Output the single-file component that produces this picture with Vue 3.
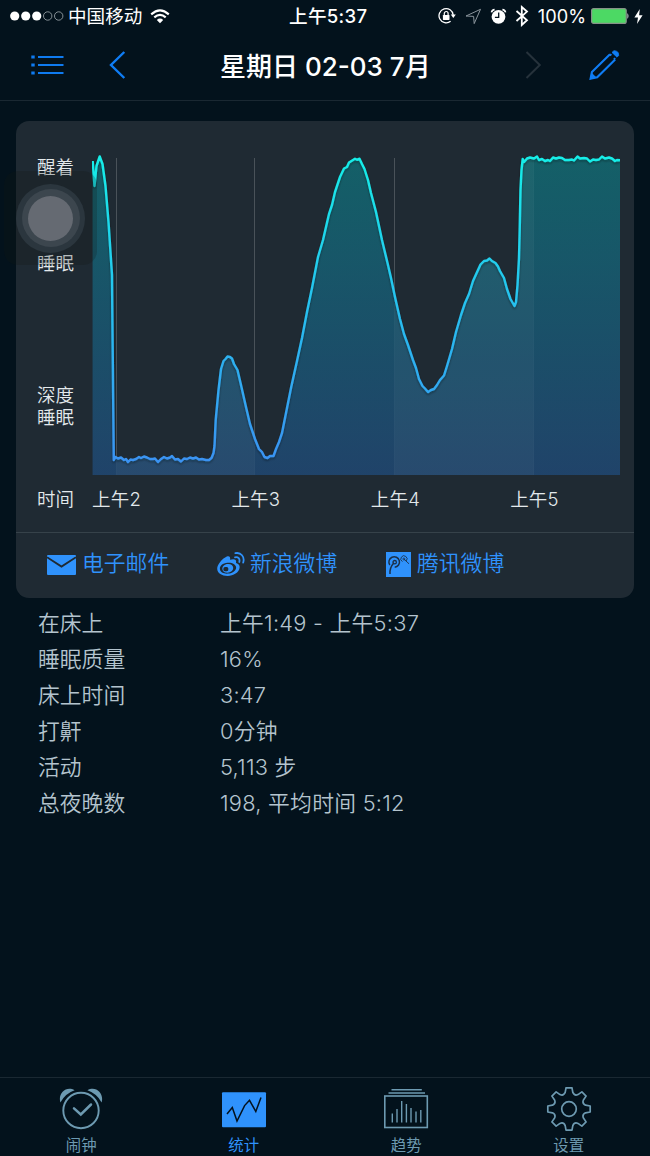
<template>
  <div class="screen">
    <header class="status-bar">
      <div class="status-left">
        <svg class="signal" width="54" height="12" viewBox="0 0 54 12">
          <circle v-for="n in 3" :key="n" :cx="n * 11 - 6.3" cy="6" r="4.6" fill="#fff" />
          <circle cx="37.7" cy="6" r="4.2" class="dot-empty" />
          <circle cx="48.7" cy="6" r="4.2" class="dot-empty" />
        </svg>
        <span class="carrier">中国移动</span>
        <svg class="wifi" width="20" height="15" viewBox="0 0 20 15">
          <path d="M1.2 5.4Q10 -2.6 18.8 5.4" />
          <path d="M4.3 8.4Q10 3.2 15.7 8.4" />
          <path d="M10 14.3L6.8 10.9Q10 8.3 13.2 10.9Z" class="wifi-core" />
        </svg>
      </div>
      <span class="clock">上午5:37</span>
      <div class="status-right">
        <svg width="18" height="18" viewBox="0 0 18 18">
          <path d="M15.2 8A7.1 7.1 0 1 0 12.6 14.2" fill="none" stroke="#fff" stroke-width="1.3" />
          <path d="M12.8 7.6H17.8L15.3 10.9Z" fill="#fff" />
          <rect x="4.9" y="7.9" width="6.6" height="5" rx="0.6" fill="#fff" />
          <path d="M6.3 8V6.4a1.9 1.9 0 0 1 3.8 0V8" fill="none" stroke="#fff" stroke-width="1.2" />
        </svg>
        <svg class="location" width="17" height="17" viewBox="0 0 17 17">
          <path d="M1 8L15.5 1.3L9.2 15.6L8.6 8.4Z" fill="none" stroke="#8b959c" stroke-width="1" />
        </svg>
        <svg class="alarm" width="17" height="17" viewBox="0 0 17 17">
          <circle cx="8.5" cy="8.8" r="6.9" fill="#fff" />
          <path d="M1.5 4.4A3.4 3.4 0 0 1 4.6 1.7M15.5 4.4A3.4 3.4 0 0 0 12.4 1.7" fill="none" stroke="#fff" stroke-width="1.7" />
          <path d="M8.7 4.6V9.3H4.9" fill="none" stroke="#03121c" stroke-width="1.3" />
        </svg>
        <svg class="bluetooth" width="14" height="22" viewBox="0 0 14 22">
          <path d="M1.5 6L12 15.2L6.8 20V2L12 6.6L1.5 16" fill="none" stroke="#fff" stroke-width="1.8" />
        </svg>
        <span class="percent">100%</span>
        <svg class="battery" width="39" height="16" viewBox="0 0 39 16">
          <rect x="0.6" y="0.6" width="34.6" height="14.8" rx="2" fill="#4cd964" stroke="#869188" stroke-width="1.2" />
          <path d="M36.4 5Q38.6 8 36.4 11Z" fill="#c9d0cf" />
        </svg>
        <svg class="bolt" width="9" height="15" viewBox="0 0 9 15">
          <path d="M5.8 0L0.4 8.4H4L3 15L8.6 6.2H5.1Z" fill="#fff" />
        </svg>
      </div>
    </header>

    <nav class="nav-bar">
      <button class="nav-btn list-btn">
        <svg width="33" height="20" viewBox="0 0 33 20">
          <path d="M0.3 2H3.7M0.3 10H3.7M0.3 18H3.7" stroke="#0f7bf0" stroke-width="3.2" />
          <path d="M7 2H32.5M7 10H32.5M7 18H32.5" stroke="#0f7bf0" stroke-width="1.8" />
        </svg>
      </button>
      <button class="nav-btn prev-btn">
        <svg width="17" height="28" viewBox="0 0 17 28">
          <path d="M15.3 1L2 14L15.3 27" fill="none" stroke="#0f7df5" stroke-width="2.4" />
        </svg>
      </button>
      <h1>星期日 02-03 7月</h1>
      <button class="nav-btn next-btn">
        <svg width="17" height="28" viewBox="0 0 17 28">
          <path d="M1.5 1L14.8 14L1.5 27" fill="none" stroke="#26323b" stroke-width="2" />
        </svg>
      </button>
      <button class="nav-btn edit-btn">
        <svg width="32" height="32" viewBox="0 0 32 32" fill="none" stroke="#0f7df5">
          <path d="M22 5.2L3.9 23L2.6 29.6L9.2 28.2L27.2 10.4" stroke-width="2.1" />
          <path d="M22 5.2L23.3 6.5M27.2 10.4L25.9 9.1" stroke-width="2" />
          <path d="M3.5 23.6L8.4 28.4L1.8 30.4Z" fill="#0f7df5" stroke="none" />
          <path d="M24 3.4L26 1.7Q31.2 2 30.6 6.6L29 8.2Z" fill="#0f7df5" stroke-width="0.8" />
        </svg>
      </button>
    </nav>

    <main>
      <section class="card">
        <div class="chart">
          <div class="levels">
            <span class="level awake">醒着</span>
            <span class="level asleep">睡眠</span>
            <span class="level deep">深度<br>睡眠</span>
          </div>
          <svg class="plot" width="528" height="325" viewBox="92 150 528 325">
            <defs>
              <linearGradient id="fill" gradientUnits="userSpaceOnUse" x1="0" y1="158" x2="0" y2="475">
                <stop offset="0" stop-color="#13636b" />
                <stop offset="0.5" stop-color="#19546c" />
                <stop offset="1" stop-color="#20456d" />
              </linearGradient>
              <linearGradient id="line" gradientUnits="userSpaceOnUse" x1="0" y1="158" x2="0" y2="460">
                <stop offset="0" stop-color="#17eee8" />
                <stop offset="0.5" stop-color="#27c0f0" />
                <stop offset="1" stop-color="#3a93f2" />
              </linearGradient>
              <clipPath id="area"><path :d="areaPath" /></clipPath>
              <filter id="shadow" x="-5%" y="-5%" width="110%" height="110%">
                <feDropShadow dx="0" dy="1.5" stdDeviation="1.2" flood-color="#05121c" flood-opacity="0.4" />
              </filter>
            </defs>
            <path v-for="x in gridLines" :key="x" :d="`M${x} 158V475`" stroke="#fff" stroke-opacity="0.19" />
            <path :d="areaPath" fill="url(#fill)" fill-opacity="0.75" />
            <path :d="areaPath" fill="url(#fill)" fill-opacity="0.75" />
            <g clip-path="url(#area)" fill="#ffffff" fill-opacity="0.04">
              <rect x="116" y="150" width="139" height="325" />
              <rect x="394" y="150" width="140" height="325" />
            </g>
            <path :d="linePath" fill="none" stroke="url(#line)" stroke-width="2.4" stroke-linejoin="round" filter="url(#shadow)" />
          </svg>
        </div>
        <div class="hours">
          <span class="hours-title">时间</span>
          <span v-for="hour in hours" :key="hour" class="hour">{{ hour }}</span>
        </div>

        <div class="share">
          <a class="share-item mail">
            <svg width="29" height="20" viewBox="0 0 29 20">
              <rect width="29" height="20" rx="1" fill="#2f92fc" />
              <path d="M0 2.2L14.5 11.5L29 2.2" fill="none" stroke="#1f2a33" stroke-width="1.9" />
            </svg>
            <span>电子邮件</span>
          </a>
          <a class="share-item sina">
            <svg width="28" height="25" viewBox="0 0 28 25">
              <path fill="#2f92fc" fill-rule="evenodd" d="M9.8 4.6C12.2 3.6 13.8 5 13 7.8C16.6 6.5 20 7 19 10.9C21.5 11.7 23 13 22.6 15.8C22 20.5 16.5 24 10.6 24C5 24 .2 21.2 .2 16.8C.2 12.6 5.5 6.5 9.8 4.6ZM10.5 10.8C5.7 11.2 2.6 13.9 2.9 17C3.2 20.2 6.7 22 11.2 21.6C15.8 21.2 19.4 18.4 19.1 15.2C18.8 12.3 15.2 10.4 10.5 10.8Z" />
              <path fill="#2f92fc" fill-rule="evenodd" d="M9.7 12.1C13 11.3 16.1 12.8 16.2 15.7C16.3 18.4 13.6 20.6 10.5 20.7C7.5 20.8 5.3 19.1 5.3 16.7C5.3 14.5 7.2 12.7 9.7 12.1ZM8.8 15.1A2.1 2.1 0 1 0 8.9 19.2A2.1 2.1 0 1 0 8.8 15.1Z" />
              <path d="M18 5.3C21.2 4.6 23.2 6.8 22.3 10M18.4 1.2C23.8 0 28 4.8 26.2 10.6" fill="none" stroke="#2f92fc" stroke-width="1.8" stroke-linecap="round" />
            </svg>
            <span>新浪微博</span>
          </a>
          <a class="share-item tencent">
            <svg width="25" height="25" viewBox="0 0 25 25">
              <rect width="25" height="25" fill="#2f92fc" />
              <g fill="none" stroke="#1c3048">
                <path d="M4 22C3.6 18 4.7 14.4 8 10.8M3.8 13A5.3 5.3 0 1 1 8.7 15.3" stroke-width="1.5" />
                <circle cx="8.7" cy="10.2" r="1.7" stroke-width="1.3" />
                <path d="M17.8 7L23 11.8M16.4 9.6A3.1 3.1 0 1 1 20.3 8.9" stroke-width="0.9" />
                <circle cx="17.9" cy="7" r="1" stroke-width="0.8" />
              </g>
            </svg>
            <span>腾讯微博</span>
          </a>
        </div>
      </section>

      <dl class="details">
        <div v-for="row in details" :key="row.label" class="detail-row">
          <dt>{{ row.label }}</dt>
          <dd>{{ row.value }}</dd>
        </div>
      </dl>
    </main>

    <footer class="tab-bar">
      <div class="tab">
        <svg width="46" height="46" viewBox="0 0 46 46">
          <g fill="#6d9ab1">
            <path d="M2.4 15.6C-0.4 6 8.4 -1.6 16.6 3.2Q6.8 6.6 2.4 15.6Z" />
            <path d="M43.6 15.6C46.4 6 37.6 -1.6 29.4 3.2Q39.2 6.6 43.6 15.6Z" />
          </g>
          <circle cx="23" cy="23.5" r="17.7" fill="none" stroke="#6d9ab1" stroke-width="1.9" />
          <path d="M16 21.3L22.8 27.5L33 17.5" fill="none" stroke="#6d9ab1" stroke-width="2.5" stroke-linecap="round" />
        </svg>
        <span>闹钟</span>
      </div>
      <div class="tab active">
        <svg width="46" height="46" viewBox="0 0 46 46">
          <rect x="1" y="5.2" width="44" height="35" rx="1" fill="#2f92fc" />
          <path d="M6 27L11.3 20.5L16 34L23.6 18.6L28.5 13.3L34.8 24.5L40 10.5" fill="none" stroke="#04121e" stroke-width="1.5" />
        </svg>
        <span>统计</span>
      </div>
      <div class="tab">
        <svg width="46" height="46" viewBox="0 0 46 46" fill="none" stroke="#6d9ab1" stroke-width="1.6">
          <path d="M8.5 2.8H38.8M5.5 6H42" />
          <rect x="1.8" y="9" width="42.5" height="31.5" />
          <path d="M9.3 35.5V26.5M14 35.5V22M18.7 35.5V14M23.4 35.5V17M28 35.5V21M33 35.5V24.5M37.8 35.5V23" stroke-width="1.4" />
        </svg>
        <span>趋势</span>
      </div>
      <div class="tab">
        <svg width="46" height="46" viewBox="0 0 46 46" fill="none" stroke="#6d9ab1" stroke-width="1.7" stroke-linejoin="round">
          <path :d="gearPath" />
          <circle cx="23" cy="22" r="7.3" />
        </svg>
        <span>设置</span>
      </div>
    </footer>

    <div class="assistive-touch">
      <div class="ring">
        <div class="ring-inner">
          <div class="knob"></div>
        </div>
      </div>
    </div>
  </div>
</template>

<script setup>
import { computed } from 'vue'

const hours = ['上午2', '上午3', '上午4', '上午5']
const gridLines = [116.5, 254.5, 394.5, 533.5]

const details = [
  { label: '在床上', value: '上午1:49 - 上午5:37' },
  { label: '睡眠质量', value: '16%' },
  { label: '床上时间', value: '3:47' },
  { label: '打鼾', value: '0分钟' },
  { label: '活动', value: '5,113 步' },
  { label: '总夜晚数', value: '198, 平均时间 5:12' }
]

const points = [
  [92.7, 161], [94.5, 186], [96.5, 166], [99.7, 156.5], [102.5, 164], [105.5, 186], [108.5, 222], [112, 275],
  [112.7, 350], [113.8, 460], [115.5, 457], [118, 458.5], [121, 457.5], [124, 460], [126, 459], [128, 462],
  [130.5, 459.5], [133, 460], [136, 459], [139, 457], [141, 458], [144, 456.5], [147, 457.5], [150, 459],
  [153, 459], [155, 458.5], [158, 462], [161, 459], [164, 457], [167, 458.5], [170, 457.5], [172, 456],
  [175, 459.5], [178, 459], [181, 461.5], [184, 458.5], [187, 459], [190, 457.5], [193, 458.5], [196, 457.5],
  [199, 459.5], [202, 459], [206, 460], [209, 460], [211.5, 458], [213.5, 453], [214.5, 446], [215.7, 420],
  [218.5, 390], [221, 369], [223.5, 361], [225.5, 359], [227.5, 356.5], [230, 357], [232, 358.5], [234, 364],
  [237.5, 370], [241, 385], [246, 407], [250, 424], [255, 439], [259, 449], [262, 452], [264.5, 457],
  [267.5, 458], [270, 456], [273.5, 456], [276, 449], [279, 442], [282, 433], [286, 413], [291, 388],
  [297, 361], [302, 338], [307, 312], [312, 288], [318, 257], [323, 240], [329, 214], [332, 205],
  [335, 192], [340, 177], [344, 168.5], [347, 167], [349, 162.5], [353, 160], [355, 158.8], [357, 159.8],
  [359.5, 158.7], [362, 164], [364.5, 169], [368, 180], [371, 193], [376, 212], [382, 240], [388, 265],
  [391, 278], [395, 297], [400, 319], [404, 334], [408, 345], [413, 360], [416, 368], [419, 379],
  [422.5, 386], [425, 388.5], [428, 392], [431, 390], [434, 389], [437, 385], [440, 380], [444, 375.5],
  [447, 366], [452, 349], [456, 332], [461, 315], [465, 303], [469, 294], [473, 281], [478, 270],
  [480.5, 264.5], [484, 261], [487, 260.5], [489.5, 258.5], [492, 261], [495.5, 263], [498, 266.5], [500, 271],
  [504, 278], [507, 289], [510.5, 299], [514.5, 306], [516, 302], [517.5, 285], [519, 258], [519.7, 230],
  [520.5, 190], [521.5, 170], [522.7, 159], [524, 162], [527, 158.5], [530, 157.5], [534, 158.5], [537, 156.5],
  [539, 160], [542, 159], [545, 161], [548, 160], [550, 161], [553, 157.5], [556, 158.5], [559, 157.5],
  [562, 158], [565, 160], [569, 160], [572, 159.5], [574, 160.5], [577.5, 156.5], [580, 158.5], [584, 158],
  [587, 158.5], [590, 161.5], [593, 159.5], [596, 160], [599, 159.5], [602, 156.5], [605, 158.5], [609, 157.5],
  [612, 158.5], [615, 161], [617, 160], [620, 160.3]
]

const linePath = computed(() => 'M' + points.map((p) => p.join(' ')).join('L'))
const areaPath = computed(() => `${linePath.value}V475H92.7Z`)

// eight teeth with concave gaps between them
const gearPath = computed(() => {
  const at = (deg, r) => {
    const a = ((deg - 90) * Math.PI) / 180
    return `${(23 + r * Math.cos(a)).toFixed(2)} ${(22 + r * Math.sin(a)).toFixed(2)}`
  }
  let d = ''
  for (let i = 0; i < 8; i++) {
    const a = i * 45
    d += `${i ? 'L' : 'M'}${at(a - 8, 21.4)}L${at(a + 8, 21.4)}L${at(a + 13, 17)}`
    d += `Q${at(a + 22.5, 14)} ${at(a + 32, 17)}`
  }
  return d + 'Z'
})
</script>

<style>
body {
  background: #03121c;
}
</style>

<style scoped>
.screen {
  position: relative;
  width: 650px;
  height: 1156px;
  display: flex;
  flex-direction: column;
  overflow: hidden;
  background: #03121c;
  font-family: Inter, "Noto Sans CJK SC", sans-serif;
  color: #fff;
}

svg {
  display: block;
  flex: none;
}

.status-bar {
  height: 32px;
  display: grid;
  grid-template-columns: 289px 1fr auto;
  align-items: center;
  font-size: 18.6px;
  line-height: 32px;
}

.status-left,
.status-right {
  display: flex;
  align-items: center;
  height: 32px;
}

.signal {
  margin-left: 10px;
}

.dot-empty {
  fill: none;
  stroke: #a5adb2;
  stroke-width: 0.8;
}

.carrier {
  margin-left: 4px;
}

.wifi {
  margin-left: 8px;
  fill: none;
  stroke: #fff;
  stroke-width: 2.1;
}

.wifi-core {
  fill: #fff;
  stroke: none;
}

.clock {
  font-weight: 500;
  font-size: 18.6px;
  letter-spacing: 0.3px;
}

.status-right {
  padding-right: 7px;
}

.location {
  margin-left: 9px;
}

.alarm {
  margin-left: 8px;
}

.bluetooth {
  margin-left: 8px;
}

.percent {
  margin-left: 9px;
  font-size: 18.2px;
}

.battery {
  margin-left: 5px;
}

.bolt {
  margin-left: 4px;
}

.nav-bar {
  height: 68px;
  display: flex;
  align-items: center;
  border-bottom: 1px solid #1a2832;
}

.nav-btn {
  padding: 0 0 3px;
  border: none;
  background: none;
}

.list-btn {
  margin-left: 31px;
}

.prev-btn {
  margin-left: 45px;
}

.nav-bar h1 {
  width: 211px;
  margin: 2px 0 0 94px;
  font-size: 26px;
  line-height: 36px;
  font-weight: 500;
  white-space: nowrap;
}

.next-btn {
  margin-left: 94px;
}

.edit-btn {
  margin-left: 46px;
}

main {
  flex: 1;
  padding: 20px 16px 0;
}

.card {
  height: 477px;
  display: flex;
  flex-direction: column;
  border-radius: 13px;
  background: #1f2a33;
}

.chart {
  display: flex;
  padding: 29px 0 0 21px;
}

.levels {
  width: 55px;
  display: flex;
  flex-direction: column;
  font-size: 18.5px;
  line-height: 22px;
  font-weight: 350;
  color: #e3e9ec;
}

.awake {
  margin-top: 6px;
}

.asleep {
  margin-top: 74px;
}

.deep {
  margin-top: 110px;
}

.hours {
  display: flex;
  height: 57px;
  padding-left: 21px;
  font-size: 18.5px;
  line-height: 48px;
  font-weight: 350;
  color: #e3e9ec;
}

.hours-title {
  flex: none;
  width: 55px;
}

.hour {
  flex: none;
  width: 139.4px;
  letter-spacing: 0.2px;
}

/* the last label only needs its own width */
.hour:last-child {
  width: auto;
}

.share {
  flex: 1;
  display: flex;
  border-top: 1px solid #36424a;
  padding-left: 31px;
}

.share-item {
  display: flex;
  align-items: center;
  height: 63px;
  font-size: 21.8px;
  line-height: 30px;
  font-weight: 350;
  color: #2f92fc;
}

.share-item span {
  margin-bottom: 3px;
}

.mail {
  width: 170px;
  gap: 6px;
}

.sina {
  width: 169px;
  gap: 5px;
}

.tencent {
  gap: 6px;
}

.details {
  margin: 7px 0 0;
  padding-left: 22px;
}

.detail-row {
  display: flex;
  height: 36.1px;
  font-size: 21.8px;
  line-height: 36px;
  font-weight: 350;
  color: #b4c4ce;
}

.detail-row dt {
  width: 182px;
}

.detail-row dd {
  margin: 0;
  letter-spacing: 0.25px;
}

.tab-bar {
  height: 78px;
  display: grid;
  grid-template-columns: repeat(4, 1fr);
  border-top: 1px solid #1a2832;
}

.tab {
  display: flex;
  flex-direction: column;
  align-items: center;
  padding-top: 9px;
  font-size: 15.4px;
  line-height: 22px;
  color: #6d9ab1;
}

.tab span {
  margin-top: 2px;
}

.tab.active {
  color: #2f92fc;
}

.assistive-touch {
  position: absolute;
  left: 4px;
  top: 171px;
  width: 93px;
  height: 94px;
  border-radius: 14px;
  background: rgba(20, 22, 20, 0.22);
  display: grid;
  place-items: center;
}

.ring,
.ring-inner,
.knob {
  display: grid;
  place-items: center;
  border-radius: 50%;
}

.ring {
  width: 69px;
  height: 69px;
  background: #2b363e;
}

.ring-inner {
  width: 58px;
  height: 58px;
  background: #3c464e;
}

.knob {
  width: 45px;
  height: 45px;
  background: #656a72;
}
</style>
